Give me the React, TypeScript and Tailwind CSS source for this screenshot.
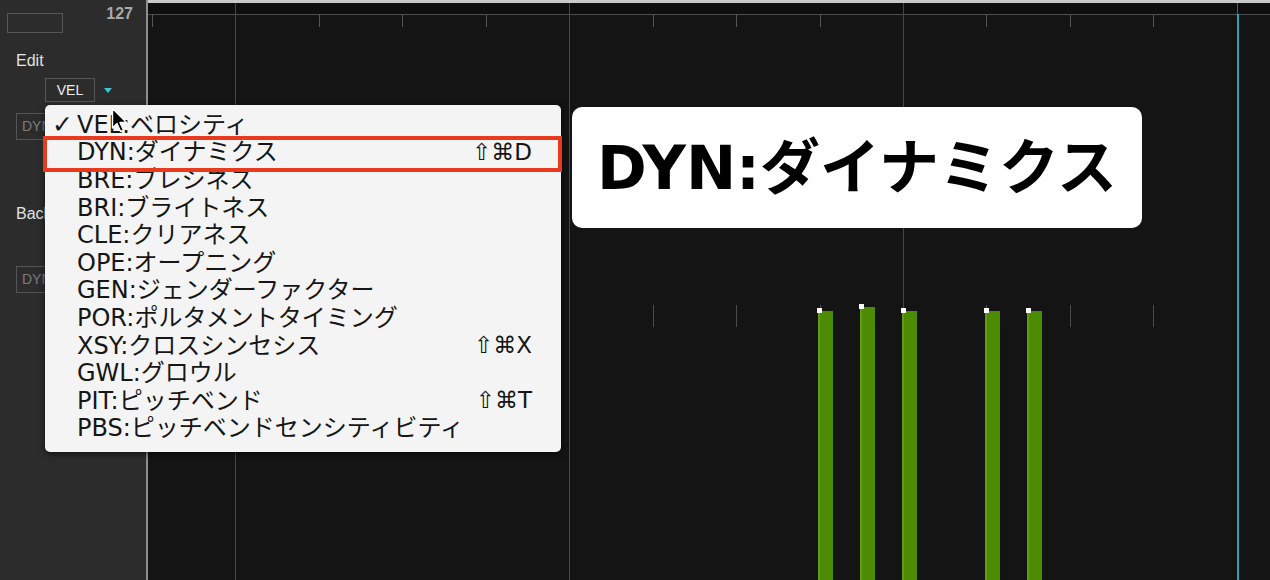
import React from "react";

// Velocity / expression lane of a piano-roll style editor with the
// parameter drop-down open.

const OX = 148; // left edge of the lane canvas on the page
const MAJOR = [235, 569, 903];
const MINOR = [152, 319, 402, 486, 653, 736, 820, 986, 1070, 1153];
const BARS = [
  { x: 818, top: 311 },
  { x: 860, top: 307 },
  { x: 902, top: 311 },
  { x: 985, top: 311 },
  { x: 1027, top: 311 },
];

type Item = { label: string; checked?: boolean; shortcut?: string };

const ITEMS: Item[] = [
  { label: "VEL:ベロシティ", checked: true },
  { label: "DYN:ダイナミクス", shortcut: "⇧⌘D" },
  { label: "BRE:ブレシネス" },
  { label: "BRI:ブライトネス" },
  { label: "CLE:クリアネス" },
  { label: "OPE:オープニング" },
  { label: "GEN:ジェンダーファクター" },
  { label: "POR:ポルタメントタイミング" },
  { label: "XSY:クロスシンセシス", shortcut: "⇧⌘X" },
  { label: "GWL:グロウル" },
  { label: "PIT:ピッチベンド", shortcut: "⇧⌘T" },
  { label: "PBS:ピッチベンドセンシティビティ" },
];

function SidePanel() {
  return (
    <aside className="w-[146px] shrink-0 bg-[#2c2c2c] flex flex-col font-['Liberation_Sans',sans-serif]">
      <div className="flex items-start h-[40px]">
        <div className="ml-[7px] mt-[13px] w-[56px] h-[20px] border border-[#575757]" />
        <span className="ml-auto mr-[13px] mt-[5px] text-[16px] leading-[18px] font-bold text-[#a9a9a9]">
          127
        </span>
      </div>
      <div className="mt-[11px] ml-[16px] text-[16px] leading-[20px] text-[#e2e2e2]">Edit</div>
      <div className="flex items-center mt-[7px] ml-[45px]">
        <div className="w-[50px] h-[24px] border border-[#575757] flex items-center justify-center text-[14px] text-[#ececec]">
          VEL
        </div>
        <div className="ml-[9px] w-0 h-0 border-l-[4px] border-r-[4px] border-t-[5px] border-l-transparent border-r-transparent border-t-[#37c6d2]" />
      </div>
      <div className="mt-[11px] ml-[16px] w-[60px] h-[27px] border border-[#555] flex items-center pl-[5px] text-[14px] text-[#7c7c7c]">
        DYN
      </div>
      <div className="mt-[64px] ml-[16px] w-[29px] overflow-hidden whitespace-nowrap text-[16px] leading-[20px] text-[#e2e2e2]">
        Background
      </div>
      <div className="mt-[42px] ml-[16px] w-[60px] h-[27px] border border-[#555] flex items-center pl-[5px] text-[14px] text-[#7c7c7c]">
        DYN
      </div>
    </aside>
  );
}

function Lane() {
  return (
    <div className="relative flex-1 bg-[#141414] overflow-hidden">
      {/* top edge and ruler band */}
      <div className="h-[3px] bg-[#c9c9c9]" />
      <div className="h-[11px] bg-[#0e0e0e]" />
      <div className="h-px bg-[#4e4e4e]" />

      {/* bar lines */}
      {MAJOR.map((x) => (
        <div
          key={x}
          className="absolute top-[3px] bottom-0 w-px bg-[#474747]"
          style={{ left: x - OX }}
        />
      ))}
      <div className="absolute top-[3px] h-[11px] w-px bg-[#5a5a5a]" style={{ left: 1237 - OX }} />
      <div className="absolute top-[14px] bottom-0 w-[2px] bg-[#2fa3b0]" style={{ left: 1236.5 - OX }} />

      {/* beat ticks */}
      {MINOR.map((x) => (
        <React.Fragment key={x}>
          <div className="absolute top-[15px] h-[12px] w-px bg-[#555]" style={{ left: x - OX }} />
          <div className="absolute top-[305px] h-[22px] w-px bg-[#4c4c4c]" style={{ left: x - OX }} />
        </React.Fragment>
      ))}

      {/* dynamics values */}
      {BARS.map((b) => (
        <React.Fragment key={b.x}>
          <div
            className="absolute bottom-0 w-[15px] bg-[#4d8c02] border-l-2 border-[#5e9e10]"
            style={{ left: b.x - OX, top: b.top }}
          />
          <div
            className="absolute w-[5px] h-[5px] bg-white"
            style={{ left: b.x - OX - 1, top: b.top - 3 }}
          />
        </React.Fragment>
      ))}
    </div>
  );
}

function ParamMenu() {
  return (
    <div className="absolute left-[45px] top-[105px] w-[516px] h-[347px] bg-[#f4f4f4] rounded-[5px] shadow-[0_2px_6px_rgba(0,0,0,0.6)] pt-[6px] font-['DejaVu_Sans','Noto_Sans_CJK_JP',sans-serif] text-[#161616]">
      {ITEMS.map((it) => (
        <div key={it.label} className="h-[27.6px] flex items-center pr-[29px]">
          <span className="w-[32px] pl-[7px] text-[25px] leading-none">{it.checked ? "✓" : ""}</span>
          <span className="text-[24px] leading-none whitespace-nowrap">{it.label}</span>
          {it.shortcut && (
            <span className="ml-auto text-[23px] leading-none whitespace-nowrap">{it.shortcut}</span>
          )}
        </div>
      ))}
    </div>
  );
}

function Pointer() {
  return (
    <svg className="absolute left-[111px] top-[107px]" width="20" height="28" viewBox="0 0 20 28">
      <path
        d="M1.5 1.5 L1.5 21 L6 16.5 L9.5 24.5 L12.5 23.2 L9 15.5 L15.5 15.5 Z"
        fill="#000"
        stroke="#fff"
        strokeWidth="1.4"
        strokeLinejoin="round"
      />
    </svg>
  );
}

export default function App() {
  return (
    <div className="relative w-[1270px] h-[580px] overflow-hidden flex bg-[#141414]">
      <SidePanel />
      <div className="w-[2px] shrink-0 bg-[#8f8f8f]" />
      <Lane />

      <ParamMenu />
      <div className="absolute left-[43px] top-[136px] w-[519px] h-[36px] border-[4px] border-[#ea3a1e]" />
      <Pointer />

      <div className="absolute left-[572px] top-[107px] w-[570px] h-[121px] bg-white rounded-[10px] flex items-center pl-[25px]">
        <span className="text-[60px] leading-none font-bold text-black whitespace-nowrap font-['DejaVu_Sans','Noto_Sans_CJK_JP',sans-serif]">
          DYN:ダイナミクス
        </span>
      </div>
    </div>
  );
}
